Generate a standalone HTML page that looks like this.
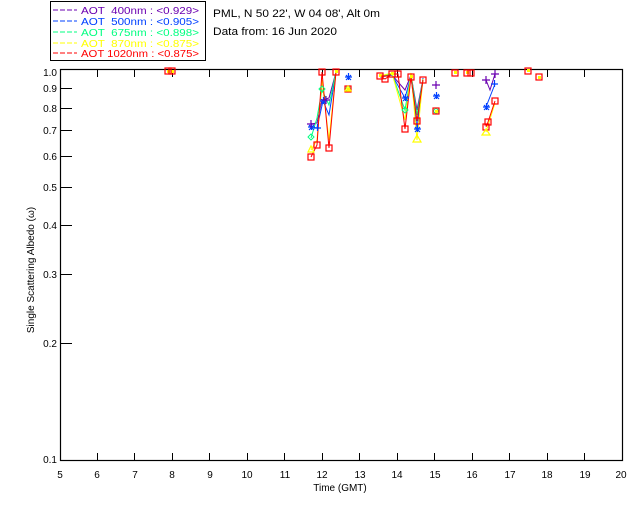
<!DOCTYPE html>
<html><head><meta charset="utf-8"><style>
html,body{margin:0;padding:0;background:#fff;}
svg{display:block;font-family:"Liberation Sans",sans-serif;}
</style></head><body>
<svg width="640" height="512" viewBox="0 0 640 512" xmlns="http://www.w3.org/2000/svg">
<rect width="640" height="512" fill="#fff"/>
<!-- legend -->
<rect x="50.5" y="1.5" width="155" height="59" fill="none" stroke="#000" stroke-width="1"/>
<g font-size="10">
<line x1="53" y1="10" x2="77" y2="10" stroke="#6a00b0" stroke-dasharray="5,2"/>
<text x="81" y="14" fill="#6a00b0" xml:space="preserve" textLength="118" lengthAdjust="spacingAndGlyphs">AOT  400nm : &lt;0.929&gt;</text>
<line x1="53" y1="21" x2="77" y2="21" stroke="#0040ff" stroke-dasharray="5,2"/>
<text x="81" y="25" fill="#0040ff" xml:space="preserve" textLength="118" lengthAdjust="spacingAndGlyphs">AOT  500nm : &lt;0.905&gt;</text>
<line x1="53" y1="32" x2="77" y2="32" stroke="#00ff80" stroke-dasharray="5,2"/>
<text x="81" y="36" fill="#00ff80" xml:space="preserve" textLength="118" lengthAdjust="spacingAndGlyphs">AOT  675nm : &lt;0.898&gt;</text>
<line x1="53" y1="43" x2="77" y2="43" stroke="#ffff00" stroke-dasharray="5,2"/>
<text x="81" y="47" fill="#ffff00" xml:space="preserve" textLength="118" lengthAdjust="spacingAndGlyphs">AOT  870nm : &lt;0.875&gt;</text>
<line x1="53" y1="53" x2="77" y2="53" stroke="#ff0000" stroke-dasharray="5,2"/>
<text x="81" y="57" fill="#ff0000" xml:space="preserve" textLength="118" lengthAdjust="spacingAndGlyphs">AOT 1020nm : &lt;0.875&gt;</text>
</g>
<text x="213" y="17" font-size="11" fill="#000" textLength="167" lengthAdjust="spacingAndGlyphs">PML, N 50 22', W 04 08', Alt 0m</text>
<text x="213" y="35" font-size="11" fill="#000" textLength="124" lengthAdjust="spacingAndGlyphs">Data from: 16 Jun 2020</text>
<!-- plot box -->
<rect x="60.5" y="69.5" width="562" height="391" fill="none" stroke="#000" stroke-width="1.2"/>
<g stroke="#000" stroke-width="1">
<path d="M97.5 461v-8M134.5 461v-8M172.5 461v-8M209.5 461v-8M247.5 461v-8M284.5 461v-8M322.5 461v-8M359.5 461v-8M397.5 461v-8M434.5 461v-8M472.5 461v-8M509.5 461v-8M547.5 461v-8M584.5 461v-8"/>
<path d="M97.5 69v8M134.5 69v8M172.5 69v8M209.5 69v8M247.5 69v8M284.5 69v8M322.5 69v8M359.5 69v8M397.5 69v8M434.5 69v8M472.5 69v8M509.5 69v8M547.5 69v8M584.5 69v8"/>
<path d="M60 88.5h12M60 108.5h12M60 130.5h12M60 156.5h12M60 187.5h12M60 225.5h12M60 274.5h12M60 343.5h12"/>
</g>
<g font-size="10" fill="#000" text-anchor="end">
<text x="57" y="76">1.0</text><text x="57" y="92">0.9</text><text x="57" y="112">0.8</text>
<text x="57" y="134">0.7</text><text x="57" y="160">0.6</text><text x="57" y="191">0.5</text>
<text x="57" y="229">0.4</text><text x="57" y="278">0.3</text><text x="57" y="347">0.2</text>
<text x="57" y="463">0.1</text>
</g>
<g font-size="10" fill="#000" text-anchor="middle">
<text x="60" y="478">5</text><text x="97" y="478">6</text><text x="135" y="478">7</text><text x="172" y="478">8</text>
<text x="210" y="478">9</text><text x="247" y="478">10</text><text x="285" y="478">11</text><text x="322" y="478">12</text>
<text x="360" y="478">13</text><text x="397" y="478">14</text><text x="435" y="478">15</text><text x="472" y="478">16</text>
<text x="510" y="478">17</text><text x="547" y="478">18</text><text x="585" y="478">19</text><text x="621" y="478">20</text>
<text x="340" y="491">Time (GMT)</text>
</g>
<text transform="translate(34,270) rotate(-90)" font-size="10" text-anchor="middle">Single Scattering Albedo (ω)</text>
<!-- data lines -->
<g fill="none" stroke-width="1">
<polyline stroke="#6a00b0" points="311,124 317,123 322,100 329,98 336,72"/>
<polyline stroke="#0040ff" points="311,127 317,128 323,101 329,115 336,72"/>
<polyline stroke="#00ff80" points="311,138 317,118 322,90 329,105 336,72"/>
<polyline stroke="#ffff00" points="311,150 317,140 322,80 329,140 336,72"/>
<polyline stroke="#ff0000" points="311,157 317,145 322,72 329,148 336,72"/>
<polyline stroke="#6a00b0" points="380,75 392,75 405,90 411,75 417,110 423,79"/>
<polyline stroke="#0040ff" points="380,77 392,75 405,98 411,76 417,129 423,78"/>
<polyline stroke="#00ff80" points="380,76 392,74 405,110 411,74 417,115 423,79"/>
<polyline stroke="#ffff00" points="380,76 392,73 405,120 411,73 417,140 423,79"/>
<polyline stroke="#ff0000" points="380,76 385,79 392,74 398,74 405,129 411,77 417,121 423,80"/>
<polyline stroke="#6a00b0" points="486,80 490,90 495,74"/>
<polyline stroke="#0040ff" points="486,107 495,84"/>
<polyline stroke="#ffff00" points="486,132 495,103"/>
<polyline stroke="#ff0000" points="486,127 488,122 495,101"/>
</g>
<!-- green diamonds / yellow fills -->
<g fill="none" stroke="#00ff80" stroke-width="1">
<path d="M311 134l3 3-3 3-3-3z M322 86l3 3-3 3-3-3z M405 107l3 3-3 3-3-3z M436 108l3 3-3 3-3-3z M348 86l3 3-3 3-3-3z"/>
</g>
<g fill="#ffff00">
<rect x="167" y="70" width="3" height="3"/><rect x="171" y="70" width="3" height="3"/>
<rect x="335" y="70" width="3" height="3"/><rect x="379" y="74" width="3" height="3"/>
<rect x="391" y="72" width="3" height="3"/><rect x="410" y="75" width="3" height="3"/>
<rect x="454" y="71" width="3" height="3"/><rect x="466" y="71" width="3" height="3"/>
<rect x="527" y="69" width="3" height="3"/><rect x="538" y="76" width="3" height="3"/>
<rect x="347" y="88" width="3" height="3"/><rect x="435" y="110" width="3" height="3"/>
</g>
<!-- markers -->
<g fill="none" stroke="#ff0000" stroke-width="1.2">
<rect x="165" y="68" width="6" height="6"/><rect x="169" y="68" width="6" height="6"/>
<rect x="308" y="154" width="6" height="6"/><rect x="314" y="142" width="6" height="6"/>
<rect x="319" y="69" width="6" height="6"/><rect x="326" y="145" width="6" height="6"/>
<rect x="333" y="69" width="6" height="6"/><rect x="345" y="86" width="6" height="6"/>
<rect x="377" y="73" width="6" height="6"/><rect x="382" y="76" width="6" height="6"/>
<rect x="389" y="71" width="6" height="6"/><rect x="395" y="71" width="6" height="6"/>
<rect x="402" y="126" width="6" height="6"/><rect x="408" y="74" width="6" height="6"/>
<rect x="414" y="118" width="6" height="6"/><rect x="420" y="77" width="6" height="6"/>
<rect x="433" y="108" width="6" height="6"/><rect x="452" y="70" width="6" height="6"/>
<rect x="464" y="70" width="6" height="6"/><rect x="468" y="70" width="6" height="6"/>
<rect x="483" y="124" width="6" height="6"/><rect x="485" y="119" width="6" height="6"/>
<rect x="492" y="98" width="6" height="6"/><rect x="525" y="68" width="6" height="6"/>
<rect x="536" y="74" width="6" height="6"/>
</g>
<g stroke="#0040ff" stroke-width="1.2">
<path d="M345 77h7M348.5 73v7M346 75l5 5M351 75l-5 5"/>
<path d="M308 127h7M311.5 123v7M309 125l5 5M314 125l-5 5"/>
<path d="M314 128h7M317.5 124v7"/>
<path d="M320 101h7M323.5 97v7M321 99l5 5M326 99l-5 5"/>
<path d="M402 98h7M405.5 94v7M403 96l5 5M408 96l-5 5"/>
<path d="M414 129h7M417.5 125v7M415 127l5 5M420 127l-5 5"/>
<path d="M433 96h7M436.5 92v7M434 94l5 5M439 94l-5 5"/>
<path d="M483 107h7M486.5 103v7M484 105l5 5M489 105l-5 5"/>
<path d="M491 84h7M494.5 80v7"/>
</g>
<g stroke="#6a00b0" stroke-width="1.2">
<path d="M307 124h8M311 120v8M432 85h8M436 81v8M482 80h8M486 76v8M491 74h8M495 70v8M322 100h8M326 96v8"/>
</g>
<g fill="none" stroke="#ffff00" stroke-width="1.2">
<path d="M413 142l4-7 4 7z M308 152l3-6 3 6z M482 135l4-6 4 6z M345 91l3-5 3 5z"/>
</g>
</svg>
</body></html>
